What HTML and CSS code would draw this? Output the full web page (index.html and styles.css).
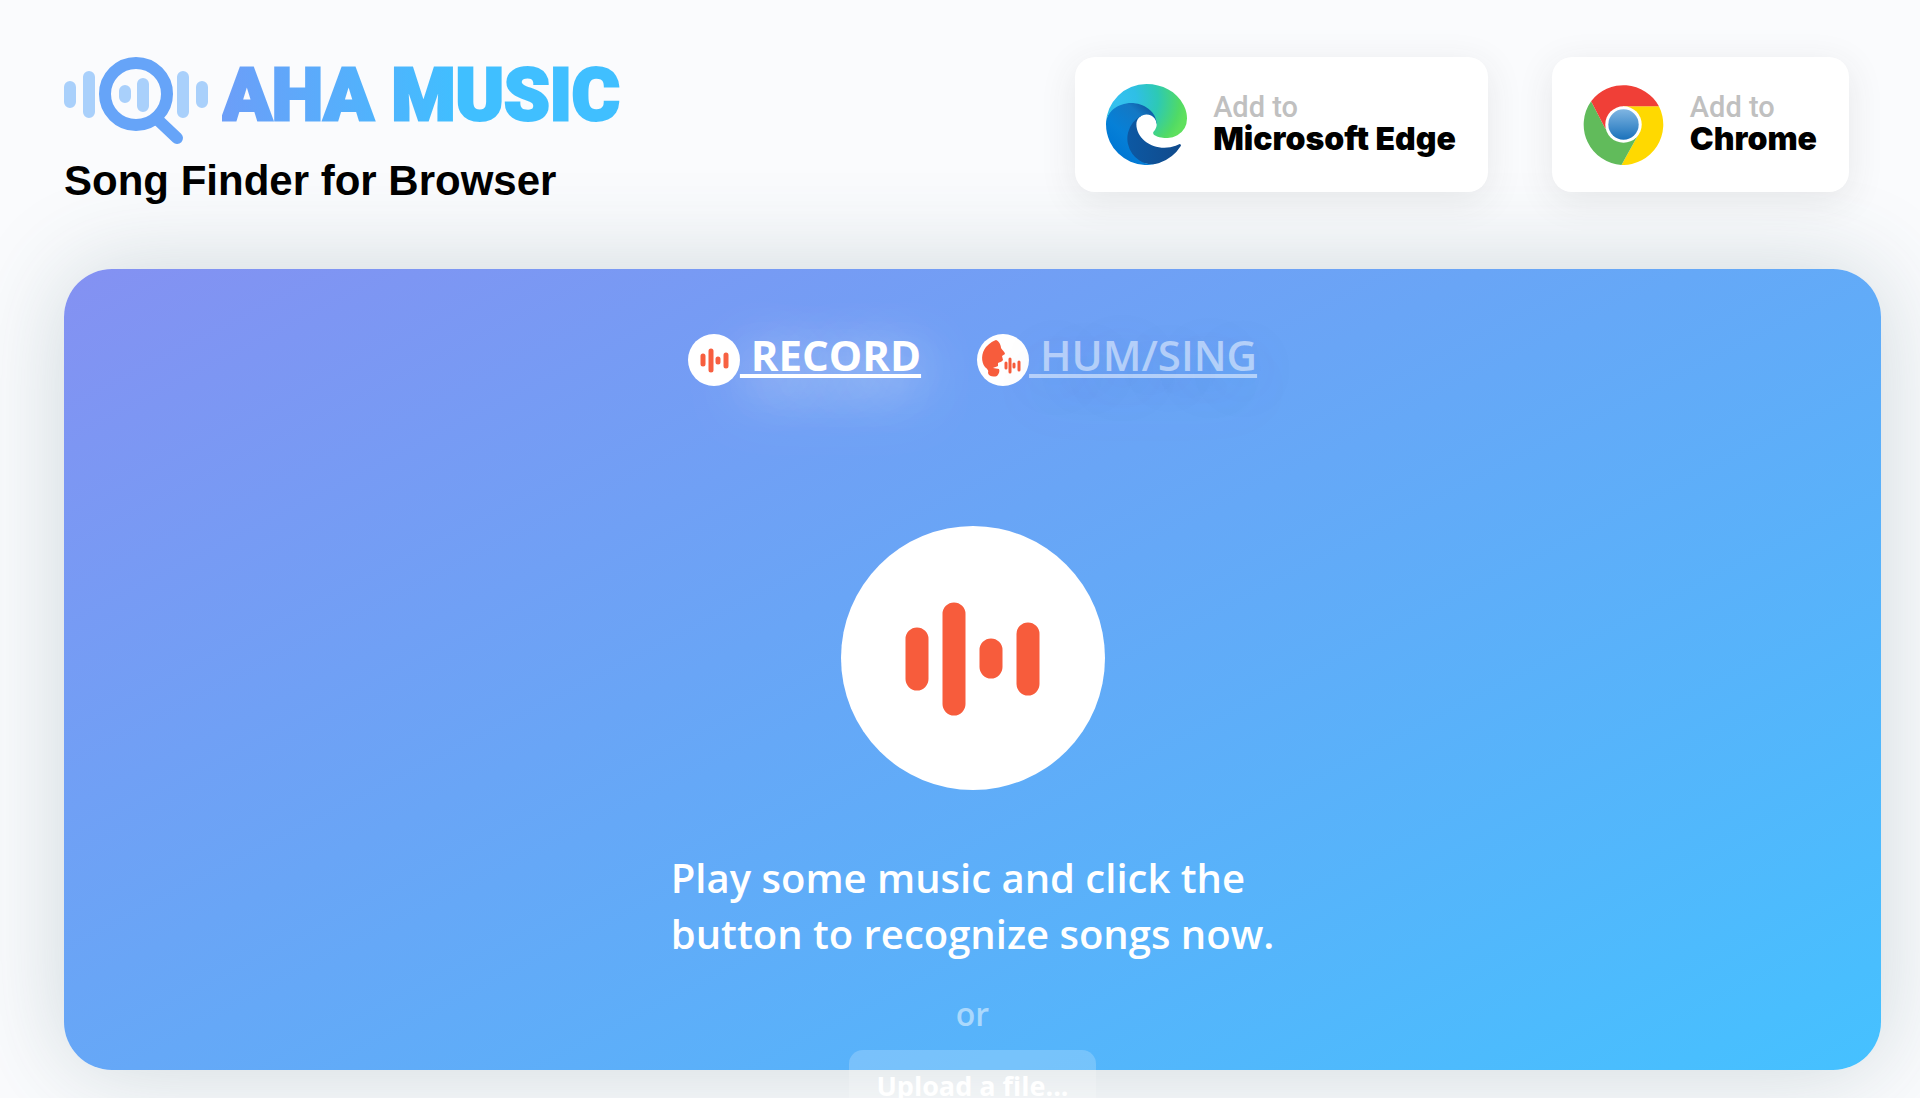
FILE: index.html
```html
<!DOCTYPE html>
<html lang="en">
<head>
  <meta charset="UTF-8">
  <meta name="viewport" content="width=device-width, initial-scale=1.0">
  <title>AHA Music - Song Finder for Browser</title>
  <link rel="stylesheet" href="styles.css">
</head>
<body>

  <header class="header">
    <div class="brand">
      <a class="logo" href="#">
        <svg class="logo-icon" viewBox="0 0 144 90" aria-hidden="true">
          <g stroke="#a9d0fb" stroke-width="12" stroke-linecap="round">
            <path d="M6 30v15M25 20v35M61 34v6M79 27v22M119 20v35M138 30v15"/>
          </g>
          <circle cx="72" cy="37" r="31" fill="none" stroke="#66a4f8" stroke-width="12"/>
          <path d="M94 63l19 18" stroke="#66a4f8" stroke-width="12" stroke-linecap="round"/>
        </svg>
        <span class="logo-text">AHA MUSIC</span>
      </a>
      <h1>Song Finder for Browser</h1>
    </div>

    <nav class="stores">
      <a class="store" href="#">
        <svg class="store-icon" viewBox="0 0 256 256" aria-hidden="true">
          <defs>
            <linearGradient id="edge-dark" x1="63" y1="177" x2="241" y2="177" gradientUnits="userSpaceOnUse">
              <stop offset="0" stop-color="#0c59a4"/>
              <stop offset="1" stop-color="#114a8b"/>
            </linearGradient>
            <linearGradient id="edge-blue" x1="157" y1="99" x2="46" y2="221" gradientUnits="userSpaceOnUse">
              <stop offset="0" stop-color="#0f5fa8"/>
              <stop offset="0.2" stop-color="#1478c4"/>
              <stop offset="0.67" stop-color="#0680d7"/>
              <stop offset="1" stop-color="#0078d4"/>
            </linearGradient>
            <radialGradient id="edge-green" cx="0" cy="0" r="1" gradientTransform="matrix(-9 202 -230 -10 26 47)" gradientUnits="userSpaceOnUse">
              <stop offset="0" stop-color="#35c1f1"/>
              <stop offset="0.3" stop-color="#2fbfe6"/>
              <stop offset="0.6" stop-color="#2dc9b5"/>
              <stop offset="0.9" stop-color="#50da66"/>
              <stop offset="1" stop-color="#5fe05e"/>
            </radialGradient>
          </defs>
          <path fill="url(#edge-dark)" d="M231 190.500a93.730 93.730 0 0 1-10.540 4.710 101.870 101.870 0 0 1-35.900 6.460c-47.320 0-88.540-32.550-88.540-74.320A31.480 31.480 0 0 1 112.460 100c-42.800 1.800-53.800 46.400-53.800 72.530 0 73.880 68.090 81.370 82.760 81.370 7.910 0 19.840-2.300 27-4.560l1.310-.440a128.340 128.340 0 0 0 66.600-52.800 4 4 0 0 0-5.330-5.600Z"/>
          <path fill="url(#edge-blue)" d="M105.730 241.420a79.200 79.200 0 0 1-22.740-21.340 80.720 80.720 0 0 1 29.470-120c3.120-1.470 8.450-4.130 15.540-4a32.350 32.350 0 0 1 25.690 13 31.880 31.880 0 0 1 6.360 18.660c0-.21 24.460-79.600-80-79.600-43.900 0-80 41.660-80 78.210a130.150 130.150 0 0 0 12.110 56 128 128 0 0 0 156.380 67.110 75.550 75.550 0 0 1-62.780-8Z"/>
          <path fill="url(#edge-green)" d="M152.330 148.860c-.81 1.050-3.300 2.500-3.300 5.660 0 2.610 1.700 5.120 4.720 7.230 14.380 10 41.490 8.680 41.560 8.680a59.560 59.560 0 0 0 30.270-8.350A61.380 61.380 0 0 0 256 109.190c.26-22.410-8-37.310-11.340-43.910C223.460 23.840 177.720 0 128 0A128 128 0 0 0 0 126.200c.48-36.540 36.800-66.050 80-66.050 3.500 0 23.460.34 42 10.070 16.340 8.580 24.900 18.940 30.850 29.210 6.180 10.670 7.280 24.150 7.280 29.520s-2.740 13.330-7.800 19.910Z"/>
        </svg>
        <span class="store-label">
          <small>Add to</small>
          <strong>Microsoft Edge</strong>
        </span>
      </a>

      <a class="store" href="#">
        <svg class="store-icon" viewBox="0 0 80 80" aria-hidden="true">
          <defs>
            <linearGradient id="chrome-blue" x1="0" y1="0" x2="0" y2="1">
              <stop offset="0" stop-color="#7fb5e2"/>
              <stop offset="1" stop-color="#1b72bb"/>
            </linearGradient>
          </defs>
          <path fill="#ffd900" d="M38 80A40 40 0 0 0 75 22H40v20l14 9z"/>
          <path fill="#61bb5b" d="M8 17A40 40 0 0 0 38 80L54 51 40 40 22 44z"/>
          <path fill="#f03f37" d="M8 17A40 40 0 0 1 75 22H40L22 44z"/>
          <circle cx="40" cy="40" r="18" fill="#fff"/>
          <circle cx="40" cy="40" r="15" fill="url(#chrome-blue)"/>
        </svg>
        <span class="store-label">
          <small>Add to</small>
          <strong>Chrome</strong>
        </span>
      </a>
    </nav>
  </header>

  <main class="panel">
    <nav class="tabs">
      <a class="tab active" href="#record">
        <svg class="tab-icon" viewBox="0 0 52 52" aria-hidden="true">
          <circle cx="26" cy="26" r="26" fill="#fff"/>
          <path d="M15 22v8M23 17v19M30 25v3M38 21v11" stroke="#f75c3c" stroke-width="5" stroke-linecap="round"/>
        </svg>
        <span>&nbsp;RECORD</span>
      </a>
      <a class="tab" href="#hum">
        <svg class="tab-icon" viewBox="0 0 52 52" aria-hidden="true">
          <circle cx="26" cy="26" r="26" fill="#fff"/>
          <path fill="#f75c3c" d="M19 6C14 8 12 10 9 13 4 19 4 28 8 33c2 2 4 3 3 6 1 4 6 4 9 3 2-2 3-5 2-7l-6-1c1-1 4-1 5-2v-3c1-1 4-1 5-3l-1-4 3-2c0-2-3-4-4-6 0-3-2-7-5-8z"/>
          <path d="M29 29v5M33 25v13M37 30v3M42 28v8" stroke="#f75c3c" stroke-width="3" stroke-linecap="round"/>
        </svg>
        <span>&nbsp;HUM/SING</span>
      </a>
    </nav>

    <button class="record-btn" type="button" aria-label="Recognize song">
      <svg viewBox="0 0 264 264" aria-hidden="true">
        <path d="M76 113v40M113 88v90M150 124v17M187 108v50" stroke="#f75c3c" stroke-width="23" stroke-linecap="round"/>
      </svg>
    </button>

    <p class="hint">Play some music and click the<br>button to recognize songs now.</p>
    <p class="or">or</p>
    <button class="upload-btn" type="button">Upload a file...</button>
  </main>

</body>
</html>
```

FILE: styles.css
```css
* {
  box-sizing: border-box;
}

body {
  margin: 0;
  min-height: 100vh;
  overflow: hidden;
  padding: 57px 39px 0 64px;
  background: #fafbfd;
  font-family: "Open Sans", "Noto Sans", sans-serif;
}

a {
  color: inherit;
  text-decoration: none;
}

/* header */
.header {
  display: flex;
  justify-content: space-between;
  align-items: flex-start;
  height: 212px;
  padding-right: 32px;
}

.logo {
  display: flex;
  gap: 14px;
}

.logo-icon {
  width: 144px;
  height: 90px;
}

.logo-text {
  font-family: Roboto, sans-serif;
  font-size: 73px;
  font-weight: 900;
  line-height: 76px;
  background: linear-gradient(90deg, #6c9ef8, #40bfff 60%);
  -webkit-background-clip: text;
  background-clip: text;
  -webkit-text-stroke: 3px transparent;
  color: transparent;
}

h1 {
  margin: 10px 0 0;
  font-family: "Liberation Sans", Arial, sans-serif;
  font-size: 42px;
  line-height: 48px;
  color: #000;
}

.stores {
  display: flex;
  gap: 64px;
}

.store {
  display: flex;
  align-items: center;
  gap: 26px;
  height: 135px;
  padding: 0 32px 0 31px;
  border-radius: 20px;
  background: #fff;
  box-shadow: 0 8px 36px rgba(60, 60, 60, 0.1);
}

.store-icon {
  width: 81px;
  height: 81px;
}

.store-label {
  display: flex;
  flex-direction: column;
}

.store-label small {
  font-family: Roboto, sans-serif;
  font-size: 29px;
  font-weight: 500;
  line-height: 28px;
  color: #c0c0c0;
}

.store-label strong {
  font-family: Inter, sans-serif;
  font-size: 32px;
  font-weight: 900;
  line-height: 36px;
  color: #000;
}

/* main panel */
.panel {
  display: flex;
  flex-direction: column;
  align-items: center;
  padding: 55px 32px 0;
  border-radius: 48px;
  background: linear-gradient(153deg, #8491f2, #69a5f6 42%, #45c1ff);
  box-shadow: 0 0 96px rgba(50, 90, 100, 0.22);
  color: #fff;
}

.tabs {
  display: flex;
  gap: 56px;
}

.tab {
  display: flex;
  align-items: center;
  height: 72px;
  font-size: 42px;
  font-weight: 600;
  color: rgba(255, 255, 255, 0.5);
  text-shadow: 0 12px 56px rgba(0, 100, 180, 0.2);
}

.tab span {
  padding-bottom: 12px;
  text-decoration: underline;
  text-decoration-thickness: 4px;
  text-underline-offset: 3px;
  text-decoration-skip-ink: none;
}

.tab.active {
  font-weight: 700;
  color: #fff;
  text-shadow: 0 12px 56px rgba(255, 255, 255, 0.8);
}

.tab-icon {
  width: 52px;
  height: 52px;
}

.record-btn {
  width: 264px;
  height: 264px;
  margin-top: 130px;
  padding: 0;
  border: none;
  border-radius: 50%;
  background: #fff;
  cursor: pointer;
}

.hint {
  margin: 60px 0 0;
  font-size: 40px;
  font-weight: 600;
  line-height: 56px;
}

.or {
  margin: 28px 0 0;
  font-size: 32px;
  font-weight: 600;
  line-height: 48px;
  color: rgba(255, 255, 255, 0.5);
}

.upload-btn {
  height: 70px;
  margin: 12px 0 -50px;
  padding: 0 27px;
  border: none;
  border-radius: 14px;
  background: rgba(255, 255, 255, 0.2);
  color: #fff;
  font-family: inherit;
  font-size: 27px;
  font-weight: 700;
  cursor: pointer;
}
```
